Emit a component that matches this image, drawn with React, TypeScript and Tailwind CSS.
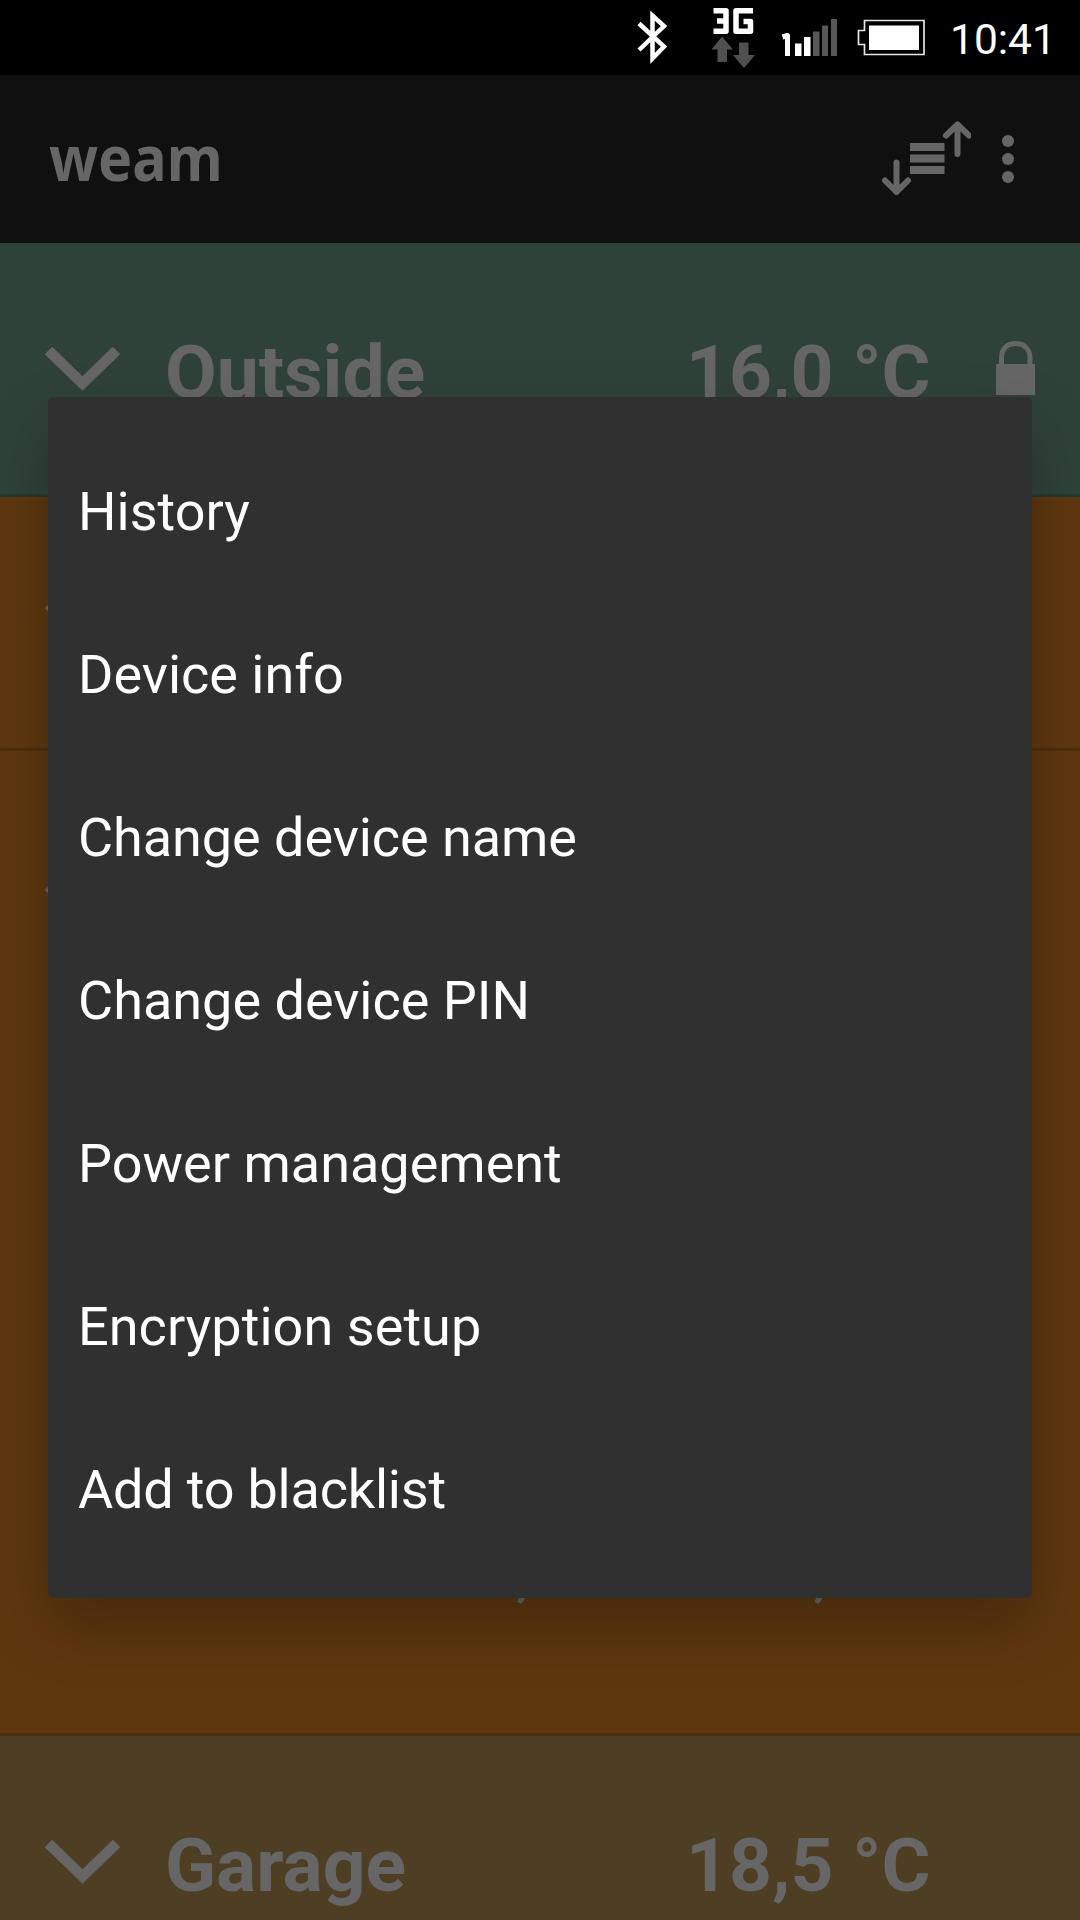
import clsx from 'clsx';

const menuItems = [
  { label: 'History' },
  { label: 'Device info' },
  { label: 'Change device name', className: 'tracking-[-0.06px]' },
  { label: 'Change device PIN' },
  { label: 'Power management' },
  { label: 'Encryption setup', className: 'tracking-[0.05px]' },
  { label: 'Add to blacklist', className: 'tracking-[-0.2px]' },
];

function Chevron({ up = false }: { up?: boolean }) {
  return (
    <svg
      width="76"
      height="44"
      viewBox="0 0 76 44"
      fill="none"
      className={clsx('shrink-0', up && '-scale-y-100')}
    >
      <path d="M3.500 3.500 L37.500 36.500 L71.500 3.500" stroke="#666666" strokeWidth="10.500" />
    </svg>
  );
}

function LockIcon() {
  return (
    <svg width="40" height="56" viewBox="0 0 40 56" fill="none">
      <path d="M5.500 24 V17 C5.500 7 12 2.500 19.500 2.500 C27 2.500 34 7 34 17 V24" stroke="#666666" strokeWidth="5" />
      <rect x="0" y="23" width="39" height="31" fill="#666666" />
    </svg>
  );
}

function StatusBar() {
  return (
    <div className="flex h-[75px] items-start bg-black">
      <svg width="926" height="75" viewBox="0 0 926 75" fill="none" className="shrink-0">
        {/* Bluetooth */}
        <path
          d="M639 23.500 L664 46.500 L652.500 58.500 V15.500 L664 26 L639 50"
          stroke="white"
          strokeWidth="4.500"
        />
        {/* Data arrows */}
        <path d="M722 36.500 L733 49.500 H727 V62 H717.500 V49.500 H711.500 Z" fill="#505050" />
        <path d="M744 68 L733 55 H739 V42.500 H748.500 V55 H755 Z" fill="#505050" />
        {/* 3G */}
        <path
          d="M713.500 10.700 H726 V31.300 H713.500 M717 21 H726"
          stroke="white"
          strokeWidth="5.500"
          strokeLinejoin="round"
        />
        <path
          d="M753 10.700 H736 V31.300 H750.500 V21.500 H743.500"
          stroke="white"
          strokeWidth="5.500"
          strokeLinejoin="round"
        />
        {/* Signal */}
        <path d="M782.500 37 L787.500 35.500 V56" stroke="white" strokeWidth="5" strokeLinejoin="round" />
        <rect x="795" y="43.500" width="6.500" height="12.500" fill="white" />
        <rect x="804" y="37" width="6.500" height="19" fill="white" />
        <rect x="813" y="31.500" width="6.500" height="24.500" fill="#585858" />
        <rect x="822" y="25.500" width="6" height="30.500" fill="#585858" />
        <rect x="831" y="19" width="6" height="37" fill="#585858" />
        {/* Battery */}
        <path d="M864.500 20.500 H924 V54.500 H864.500 V44.500 H858.500 V30.500 H864.500 Z" stroke="#e6e6e6" strokeWidth="1.700" />
        <rect x="869" y="25.500" width="50" height="24.500" fill="white" />
      </svg>
      <span className="ml-[24px] mt-[15px] text-[42.500px] leading-[50px] text-white">10:41</span>
    </div>
  );
}

function AppBar() {
  return (
    <div className="flex h-[168px] items-center bg-[#101010] pl-[49px]">
      <span className="mb-[4px] w-[832px] origin-left scale-x-[0.925] text-[62px] font-bold leading-none text-[#666666] font-['Noto_Sans',sans-serif]">
        weam
      </span>
      <svg width="90" height="76" viewBox="0 0 90 76" fill="none" className="shrink-0">
        <g stroke="#666666" strokeWidth="6" strokeLinecap="round" strokeLinejoin="round">
          <path d="M15.500 41.500 V71 M4 59.500 L15.500 71 L27 59.500" />
          <path d="M76.500 33 V3.500 M65 14.500 L76.500 3.500 L88 14.500" />
        </g>
        <rect x="29" y="22" width="34.500" height="8" fill="#666666" />
        <rect x="29" y="33.500" width="34.500" height="8" fill="#666666" />
        <rect x="29" y="45" width="34.500" height="8" fill="#666666" />
      </svg>
      <div className="ml-[31px] flex flex-col gap-1.5">
        <div className="size-3 rounded-full bg-[#666666]" />
        <div className="size-3 rounded-full bg-[#666666]" />
        <div className="size-3 rounded-full bg-[#666666]" />
      </div>
    </div>
  );
}

interface DeviceRowProps {
  name: string;
  temperature: string;
  locked?: boolean;
  className: string;
}

function DeviceRow({ name, temperature, locked, className }: DeviceRowProps) {
  return (
    <div className={clsx('flex h-[254px] shrink-0 items-center border-b-3 pl-[45px]', className)}>
      <Chevron />
      <span className="ml-[44px] mt-[7px] w-[521px] text-[75px] font-bold leading-none">{name}</span>
      <span className="mt-[7px] w-[310px] text-[75px] font-bold leading-none">{temperature}</span>
      {locked && <LockIcon />}
    </div>
  );
}

export default function App() {
  return (
    <div className="relative h-[1920px] w-[1080px] overflow-hidden bg-black font-[Roboto,sans-serif] text-[#666666]">
      <StatusBar />
      <AppBar />

      {/* Device list */}
      <div className="flex h-[1677px] flex-col overflow-hidden">
        <DeviceRow name="Outside" temperature="16,0 °C" locked className="border-[#283931] bg-[#2f4239]" />
        <DeviceRow name="" temperature="" className="border-[#4d2f0f] bg-[#5e370f]" />
        <div className="flex h-[985px] shrink-0 flex-col justify-between border-b-3 border-[#4d2f0f] bg-[#5e370f] pb-[130px] pl-[45px] pt-[102px]">
          <Chevron up />
          <div className="flex gap-[284px] pl-[471px] text-[54px] font-bold leading-none">
            <span>,</span>
            <span>,</span>
          </div>
        </div>
        <DeviceRow name="Garage" temperature="18,5 °C" className="border-[#433720] bg-[#4e3f24]" />
      </div>

      {/* Context menu */}
      <div className="absolute left-[48px] top-[397px] h-[1201px] w-[984px] rounded-md bg-[#303030] pt-[33px] shadow-[0_28px_60px_rgba(0,0,0,0.25)]">
        {menuItems.map((item) => (
          <div
            key={item.label}
            className={clsx('flex h-[163px] items-center pl-[30px] text-[54px] text-white', item.className)}
          >
            {item.label}
          </div>
        ))}
      </div>
    </div>
  );
}
